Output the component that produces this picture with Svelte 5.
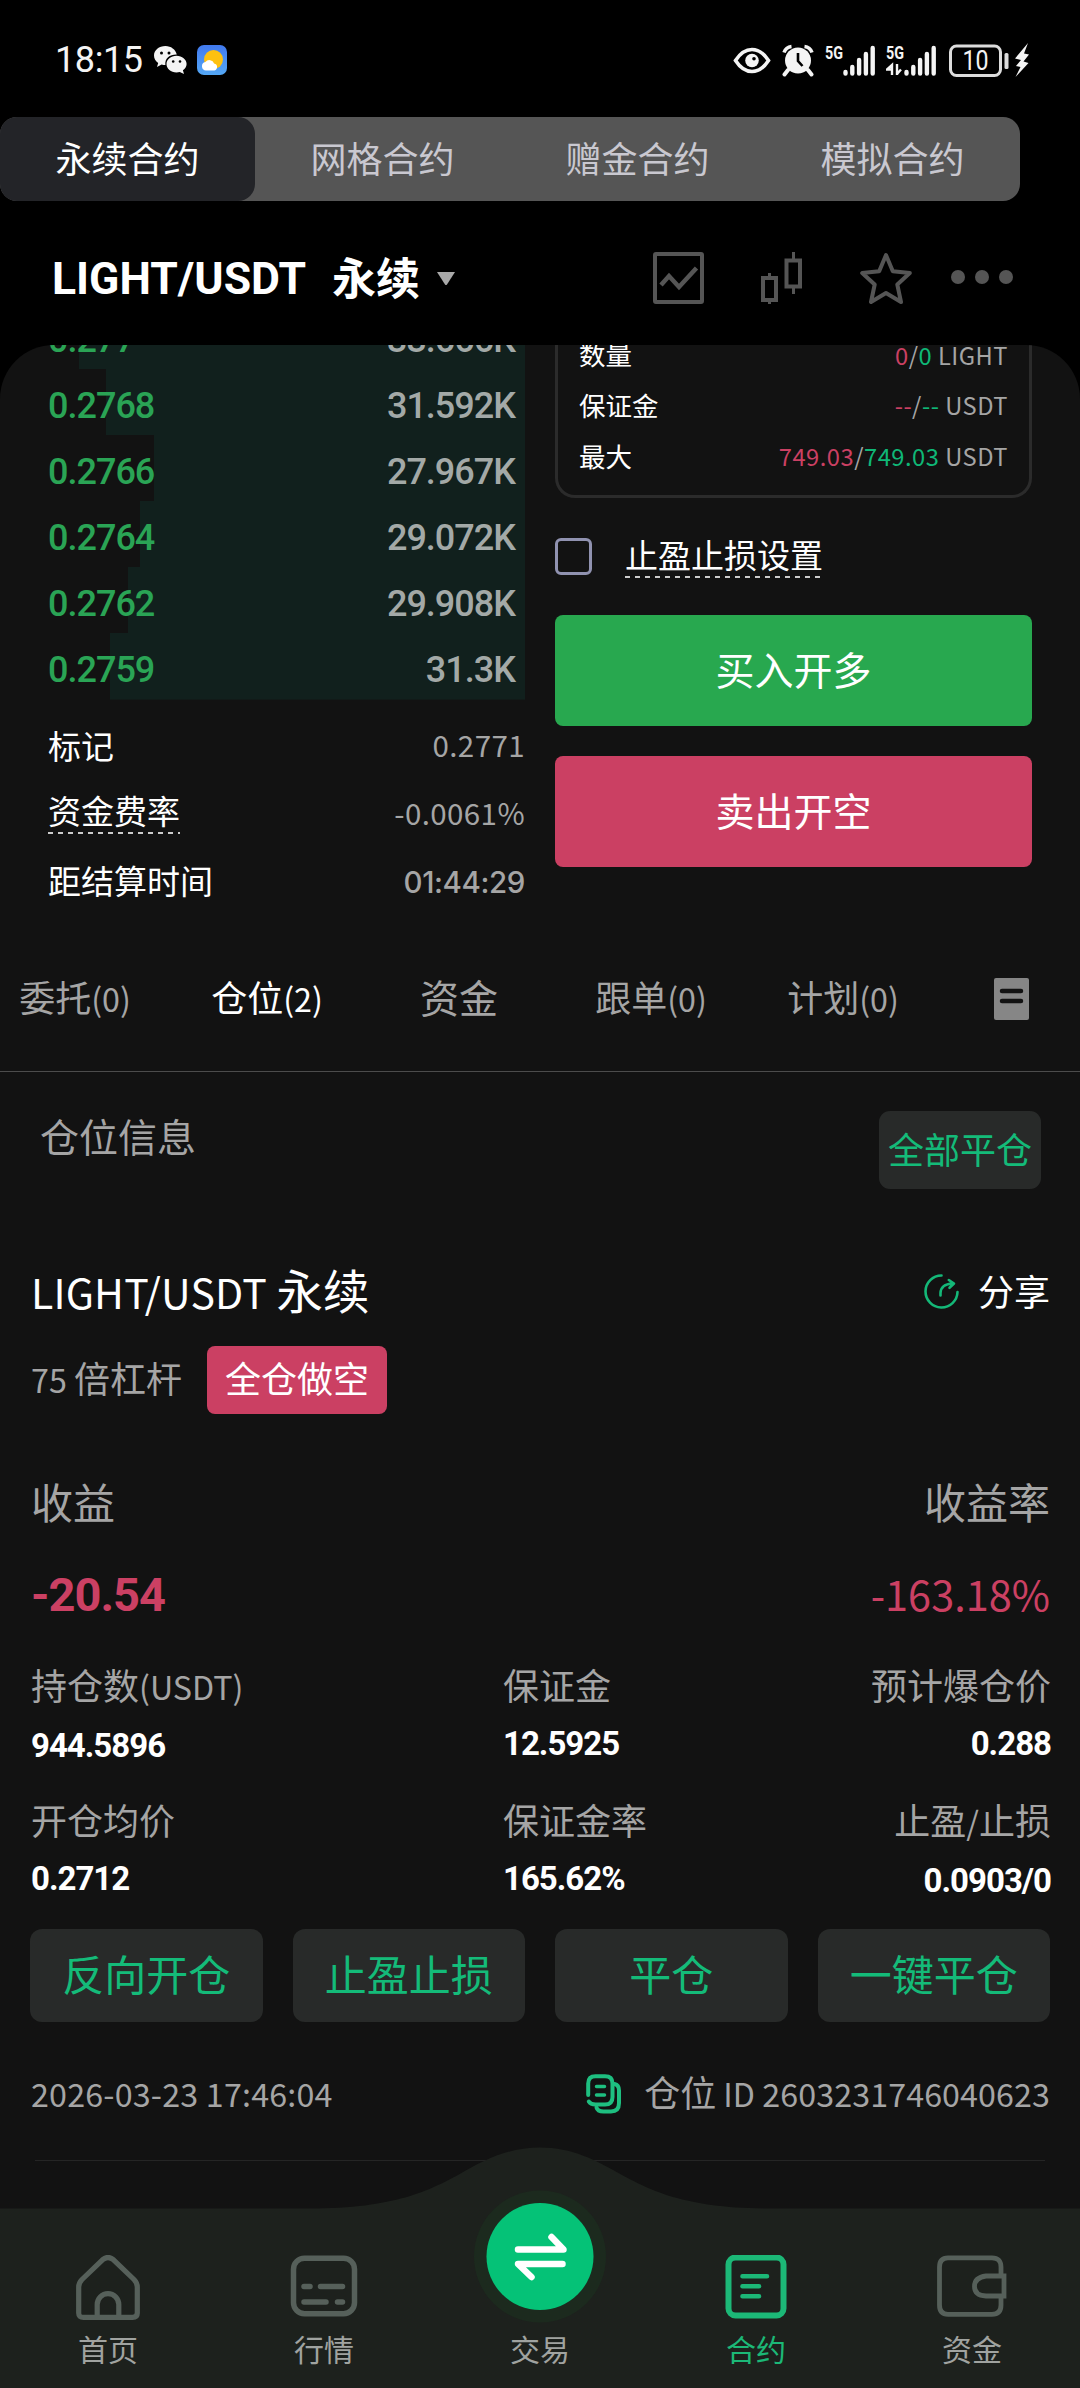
<script lang="ts">
  /**
   * Perpetual contract trading screen: order book tail, order form tail,
   * open position card and the bottom navigation.
   */

  const modes = ['永续合约', '网格合约', '赠金合约', '模拟合约'];
  let activeMode = $state(0);

  // width = depth bar length in px
  const bids = [
    { price: '0.277', amount: '33.666K', width: 446.5 },
    { price: '0.2768', amount: '31.592K', width: 419 },
    { price: '0.2766', amount: '27.967K', width: 371.5 },
    { price: '0.2764', amount: '29.072K', width: 385.5 },
    { price: '0.2762', amount: '29.908K', width: 397 },
    { price: '0.2759', amount: '31.3K', width: 415 },
  ];

  const limits = [
    { label: '数量', short: '0', long: '0', unit: 'LIGHT' },
    { label: '保证金', short: '--', long: '--', unit: 'USDT' },
    { label: '最大', short: '749.03', long: '749.03', unit: 'USDT' },
  ];

  const tabs = ['委托(0)', '仓位(2)', '资金', '跟单(0)', '计划(0)'];
  let activeTab = $state(1);

  const stats = [
    { label: '持仓数(USDT)', value: '944.5896' },
    { label: '保证金', value: '12.5925' },
    { label: '预计爆仓价', value: '0.288' },
    { label: '开仓均价', value: '0.2712' },
    { label: '保证金率', value: '165.62%' },
    { label: '止盈/止损', value: '0.0903/0' },
  ];

  const actions = ['反向开仓', '止盈止损', '平仓', '一键平仓'];

  // Latin runs are set a little smaller than the Chinese around them
  function runs(text: string) {
    return text
      .split(/([\x20-\x7e]+)/)
      .filter(Boolean)
      .map((t) => ({ t, latin: /^[\x20-\x7e]/.test(t) }));
  }
</script>

{#snippet mixed(text: string)}{#each runs(text) as r}{#if r.latin}<span class="latin">{r.t}</span>{:else}{r.t}{/if}{/each}{/snippet}

<div class="screen">
  <header class="status">
    <span class="clock">18:15</span>
    <svg class="wechat" width="33" height="28" viewBox="0 0 33 28">
      <path fill="#f4f4f4" d="M11.5 0C5 0 0 4.200 0 9.500c0 3 1.600 5.600 4.200 7.400L3 21l4.600-2.400c1.300.4 2.600.5 3.800.5C10.500 12 16 8.300 22.800 8.500 21.500 3.500 17 0 11.500 0z" />
      <path fill="#f4f4f4" d="M22.500 9.800c-5.600 0-10 3.700-10 8.300s4.400 8.300 10 8.300c1.200 0 2.300-.2 3.300-.5L30 28l-1.100-3.700c2.300-1.500 3.700-3.700 3.700-6.200 0-4.600-4.500-8.300-10.100-8.300z" />
      <g fill="#000">
        <circle cx="7.500" cy="7" r="1.500" /><circle cx="15" cy="7" r="1.500" />
        <circle cx="19.200" cy="15.500" r="1.300" /><circle cx="26" cy="15.500" r="1.300" />
      </g>
    </svg>
    <svg class="weather" width="30" height="30" viewBox="0 0 30 30">
      <defs>
        <linearGradient id="sky" x1="0" y1="0" x2="0" y2="1">
          <stop offset="0" stop-color="#4179ee" /><stop offset="1" stop-color="#54a8f6" />
        </linearGradient>
      </defs>
      <rect width="30" height="30" rx="7" fill="url(#sky)" />
      <circle cx="16.500" cy="14.500" r="9.500" fill="#fdc110" />
      <path fill="#fff" d="M9 25.500a4.300 4.300 0 0 1-.6-8.500 5 5 0 0 1 8.700 1.500 3.600 3.600 0 0 1 .4 7z" />
    </svg>

    <div class="status-right">
      <svg width="38" height="34" viewBox="0 0 38 34">
        <path d="M2.500 17.500C8 9 13.500 6.500 19 6.500s11 2.500 16.500 11C30 26 24.500 28.500 19 28.500S8 26 2.500 17.500z" fill="none" stroke="#f4f4f4" stroke-width="3.600" />
        <circle cx="19" cy="17.500" r="6.800" fill="#f4f4f4" /><circle cx="21" cy="15.800" r="1.800" fill="#000" />
      </svg>
      <svg class="alarm" width="32" height="34" viewBox="0 0 32 34">
        <circle cx="16" cy="17.500" r="13" fill="#f4f4f4" />
        <path d="M2 9.500A9 9 0 0 1 9.500 3.500M22.500 3.500A9 9 0 0 1 30 9.500" fill="none" stroke="#f4f4f4" stroke-width="3.500" />
        <path d="M6 27l-3.500 4.500M26 27l3.500 4.500" stroke="#f4f4f4" stroke-width="4" stroke-linecap="round" />
        <path d="M16 10v8l4.500 5" fill="none" stroke="#000" stroke-width="2.600" />
      </svg>
      <svg class="signal" width="52" height="34" viewBox="0 0 52 34">
        <text x="0" y="15.500" textLength="18" lengthAdjust="spacingAndGlyphs">5G</text>
        <path d="M20.500 29v1.500M27.300 24v6.500M34.100 17v13.500M40.900 11v19.500M47.700 5v25.500" stroke="#f4f4f4" stroke-width="4.400" stroke-linecap="round" />
      </svg>
      <svg class="signal two" width="52" height="34" viewBox="0 0 52 34">
        <text x="0" y="15.500" textLength="18" lengthAdjust="spacingAndGlyphs">5G</text>
        <path d="M6 32V22l-5 4.500H6M11 21v11M11 31l4-4.500" fill="none" stroke="#f4f4f4" stroke-width="2.400" />
        <path d="M20.500 29v1.500M27.300 24v6.500M34.100 17v13.500M40.900 11v19.500M47.700 5v25.500" stroke="#f4f4f4" stroke-width="4.400" stroke-linecap="round" />
      </svg>
      <svg class="battery" width="62" height="34" viewBox="0 0 62 34">
        <rect x="1.500" y="3" width="50" height="29.500" rx="6" fill="none" stroke="#dcdcdc" stroke-width="3" />
        <rect x="55.500" y="10" width="4" height="16" rx="1.500" fill="#dcdcdc" />
        <text class="level" x="26.500" y="27" text-anchor="middle" textLength="26" lengthAdjust="spacingAndGlyphs">10</text>
      </svg>
      <svg class="bolt" width="16" height="34" viewBox="0 0 16 34">
        <path fill="#f4f4f4" d="M14 0L1 15.500l6 1.500-5 6 4.500 1L1.500 34 14.500 20l-5-1.500 5.500-7-5-1z" />
      </svg>
    </div>
  </header>

  <nav class="modes">
    {#each modes as mode, i}
      <button class="mode" class:active={activeMode === i} onclick={() => (activeMode = i)}>{mode}</button>
    {/each}
  </nav>

  <div class="pair">
    <span class="pair-name">LIGHT/USDT</span>
    <span class="pair-kind">永续</span>
    <svg class="caret" width="20" height="15" viewBox="0 0 20 15"><path d="M1 1h18l-8 12.500q-1 1-2 0z" fill="#a9a9a9" /></svg>
    <div class="tools">
      <svg width="52" height="52" viewBox="0 0 52 52" fill="none" stroke="#555" stroke-width="4">
        <rect x="2" y="2" width="47" height="48" rx="1" />
        <path d="M8 33l8-9 10 11 17.500-19" stroke-width="4.500" />
      </svg>
      <svg class="candles" width="42" height="52" viewBox="0 0 42 52" fill="none" stroke="#555">
        <rect x="2" y="26" width="13" height="22" stroke-width="4" />
        <rect x="25.500" y="8.500" width="13.500" height="26" stroke-width="4" />
        <path d="M8.500 21v5M8.500 48v4M32.500 0v8M32.500 35v7" stroke-width="3" />
      </svg>
      <svg class="star" width="52" height="52" viewBox="0 0 52 52">
        <path d="M26 3l6.800 16.200 17 1.800-12.500 11.500L41 50 26 41 11 50l3.700-17.500L2.200 21l17-1.800z" fill="none" stroke="#555" stroke-width="4" stroke-linejoin="round" />
      </svg>
      <svg class="dots" width="62" height="52" viewBox="0 0 62 52" fill="#555">
        <circle cx="7" cy="25" r="7" /><circle cx="31" cy="25" r="7" /><circle cx="55" cy="25" r="7" />
      </svg>
    </div>
  </div>

  <main class="sheet">
    <section class="trade">
      <div class="book">
        {#each bids as bid}
          <div class="bid" style="--depth: {bid.width}px">
            <span class="price">{bid.price}</span>
            <span class="amount">{bid.amount}</span>
          </div>
        {/each}
        <div class="facts">
          <div class="fact"><span>标记</span><span class="val latin">0.2771</span></div>
          <div class="fact"><span class="hint">资金费率</span><span class="val latin">-0.0061%</span></div>
          <div class="fact"><span>距结算时间</span><span class="val countdown">01:44:29</span></div>
        </div>
      </div>

      <div class="form">
        <div class="limits">
          {#each limits as row}
            <div class="limit">
              <span>{row.label}</span>
              <span class="val latin"><i class="red">{row.short}</i>/<i class="green">{row.long}</i> {row.unit}</span>
            </div>
          {/each}
        </div>
        <label class="tpsl">
          <span class="box"></span>
          <span class="hint">止盈止损设置</span>
        </label>
        <button class="order buy">买入开多</button>
        <button class="order sell">卖出开空</button>
      </div>
    </section>

    <nav class="tabs">
      {#each tabs as tab, i}
        <button class="tab" class:active={activeTab === i} class:big={!tab.includes('(')} onclick={() => (activeTab = i)}>{@render mixed(tab)}</button>
      {/each}
      <svg class="list" width="35" height="42" viewBox="0 0 35 42">
        <rect width="35" height="42" rx="2" fill="#868686" />
        <path d="M8 13h19M8 23h19" stroke="#121212" stroke-width="4.500" stroke-linecap="round" />
      </svg>
    </nav>

    <div class="section-head">
      <span class="section-title">仓位信息</span>
      <button class="close-all">全部平仓</button>
    </div>

    <article class="position">
      <div class="line title-line">
        <span class="name">{@render mixed('LIGHT/USDT 永续')}</span>
        <span class="share">
          <svg width="35" height="35" viewBox="0 0 35 35" fill="none" stroke="#14b878" stroke-width="2.600" stroke-linecap="round" stroke-linejoin="round">
            <path d="M17.500 1.500A16 16 0 1 0 33.500 18" />
            <path d="M16.500 21.500V19Q17 10 28.500 9.500M24.800 6L30 9.500 25.500 13.800" />
          </svg>
          <span>分享</span>
        </span>
      </div>
      <div class="line lever-line">
        <span class="lever">{@render mixed('75 倍杠杆')}</span>
        <span class="badge">全仓做空</span>
      </div>
      <div class="line pnl-label"><span>收益</span><span>收益率</span></div>
      <div class="line pnl"><b>-20.54</b><span class="rate">-163.18%</span></div>

      <div class="stats">
        {#each stats as s}
          <div class="stat">
            <span class="stat-label">{@render mixed(s.label)}</span>
            <b>{s.value}</b>
          </div>
        {/each}
      </div>

      <div class="actions">
        {#each actions as a}
          <button>{a}</button>
        {/each}
      </div>

      <div class="line meta">
        <span class="latin time">2026-03-23 17:46:04</span>
        <span class="id">
          <svg width="35" height="40" viewBox="0 0 35 40" fill="none" stroke="#1ebf80" stroke-width="4" stroke-linecap="round">
            <path d="M2.200 21V9.500Q2.200 2.200 9.500 2.200H19Q26.500 2.200 26.500 9.500V23Q26.500 30.500 19 30.500H9.500Q4.500 30.500 2.800 27.500" />
            <path d="M28.500 10Q33 11 33 16.500V29Q33 37.500 25 37.500H17.500Q11.500 37.500 10.500 33.500" />
            <path d="M10.500 12.500h8M10.500 21h8" stroke-width="3.500" />
          </svg>
          <span>仓位<span class="latin pid">ID 2603231746040623</span></span>
        </span>
      </div>
      <hr />
    </article>
  </main>

  <nav class="bottom">
    <svg class="hump" width="1080" height="241" viewBox="0 0 1080 241">
      <path d="M0 61.500H310C395 61.500 430 43 458 28C484 13 508 .5 540 .5C572 .5 596 13 622 28C650 43 685 61.500 770 61.500H1080V241H0z" fill="#1d211d" />
      <circle cx="540" cy="109.500" r="66" fill="#1c2a1e" />
      <circle cx="540" cy="109.500" r="53.500" fill="#05c277" />
      <path d="M518 102.500H563.500L551.500 90M562.500 117H518L531.500 130" fill="none" stroke="#fff" stroke-width="6.500" stroke-linecap="round" stroke-linejoin="round" />
    </svg>
    <a href="#home" class="item">
      <svg width="68" height="66" viewBox="0 0 68 66" fill="none" stroke="#56605a" stroke-width="5.200" stroke-linejoin="round">
        <path d="M28.500 4.800Q34 .2 39.500 4.800L60 24.500Q63.300 28 63.300 32V58Q63.300 62.400 58.500 62.400H9.500Q4.700 62.400 4.700 58V32Q4.700 28 8 24.500z" />
        <path d="M23.200 61V49.500A10.800 10.800 0 0 1 44.800 49.500V61" />
      </svg>
      <span>首页</span>
    </a>
    <a href="#market" class="item">
      <svg width="68" height="66" viewBox="0 0 68 66" fill="none" stroke="#56605a" stroke-width="5.500" stroke-linecap="round">
        <rect x="3.500" y="3.200" width="61" height="55.500" rx="11" />
        <path d="M14 31.500h6M30.500 31.500h22M14 47h22M47.500 47h5" />
      </svg>
      <span>行情</span>
    </a>
    <a href="#trade" class="item">
      <span class="spacer"></span>
      <span>交易</span>
    </a>
    <a href="#contract" class="item active">
      <svg width="68" height="66" viewBox="0 0 68 66" fill="none" stroke="#1cb877" stroke-linecap="round">
        <rect x="6.500" y="2.500" width="55" height="58" rx="7" stroke-width="6" />
        <path d="M20.500 21.300H45M20.500 31.300H37M20.500 41.300H37" stroke-width="4.600" />
      </svg>
      <span>合约</span>
    </a>
    <a href="#assets" class="item">
      <svg width="70" height="66" viewBox="0 0 70 66" fill="none" stroke="#56605a" stroke-width="4.800">
        <path d="M64 21V12Q64 2.800 55 2.800H11Q2.500 2.800 2.500 12V50Q2.500 59.300 11 59.300H55Q64 59.300 64 50V42" />
        <path d="M67 21H49Q37.500 22.500 37.500 31.500T49 41H67z" />
      </svg>
      <span>资金</span>
    </a>
  </nav>
</div>

<style>
  :global(body) {
    margin: 0;
    background: #000;
  }

  .screen {
    position: relative;
    width: 1080px;
    height: 2388px;
    overflow: hidden;
    display: flex;
    flex-direction: column;
    background: #000;
    color: #fff;
    font-family: 'Noto Sans CJK SC', sans-serif;
    font-size: 36px;
    line-height: 1;
  }

  .screen svg {
    display: block;
    flex: none;
  }

  button {
    padding: 0 0 5px;
    border: 0;
    background: none;
    color: inherit;
    font: inherit;
  }

  b {
    font-family: Roboto, sans-serif;
    font-weight: 700;
  }

  .latin { font-size: 0.895em; }
  .red { color: #cb4063; }
  .green { color: #0fb877; }

  /* status bar */
  .status {
    display: flex;
    align-items: center;
    height: 117px;
    box-sizing: border-box;
    padding: 2px 50px 0 55px;
  }

  .clock {
    width: 99px;
    font-family: Roboto, sans-serif;
    font-size: 36px;
    letter-spacing: -0.4px;
    color: #f4f4f4;
  }

  .weather { margin-left: 10px; }

  .status-right {
    display: flex;
    align-items: center;
    margin-left: auto;
  }

  .alarm { margin-left: 11px; }
  .signal { margin-left: 11px; }
  .signal.two { margin-left: 9px; }
  .battery { margin-left: 11px; }
  .bolt { margin-left: 3px; }

  .signal text {
    font: 700 19px Roboto, sans-serif;
    fill: #f4f4f4;
  }

  .battery .level {
    font: 400 28px Roboto, sans-serif;
    fill: #f4f4f4;
  }

  /* contract modes */
  .modes {
    display: flex;
    width: 1020px;
    height: 84px;
    border-radius: 17px;
    background: #555;
  }

  .mode {
    width: 255px;
    border-radius: 17px;
    color: #c9c8d0;
  }

  .mode.active {
    background: #232428;
    color: #fff;
  }

  /* pair header */
  .pair {
    display: flex;
    align-items: center;
    height: 144px;
    box-sizing: border-box;
    padding: 10px 67px 0 52px;
  }

  .pair-name {
    width: 280px;
    padding-top: 3px;
    font: 700 44.500px/1 Roboto, sans-serif;
    white-space: nowrap;
  }

  .pair-kind {
    padding-bottom: 4px;
    font-size: 44px;
    font-weight: 700;
  }

  .caret { margin-left: 16px; }

  .tools {
    display: flex;
    margin-left: auto;
    margin-top: -1px;
  }

  .candles { margin-left: 56px; }
  .star { margin-left: 57px; }
  .dots { margin-left: 39px; }

  /* scrolling sheet */
  .sheet {
    flex: 1;
    border-radius: 54px 54px 0 0;
    overflow: hidden;
    background: #121212;
  }

  .trade {
    display: flex;
    gap: 30px;
    height: 582px;
    padding: 0 48px;
  }

  .book {
    width: 477px;
    flex: none;
    margin-top: -42px;
  }

  .bid {
    display: flex;
    justify-content: space-between;
    align-items: center;
    height: 66.100px;
    box-sizing: border-box;
    padding: 7px 10px 0 0;
    background: linear-gradient(#11201d, #11201d) right / var(--depth) 100% no-repeat;
    font: 500 36px/1 Roboto, sans-serif;
    letter-spacing: -1px;
  }

  .price { color: #2aa455; }
  .amount { color: #a3a9a7; }

  .facts {
    padding-top: 12px;
    font-size: 33px;
  }

  .fact {
    display: flex;
    justify-content: space-between;
    align-items: center;
    height: 67.400px;
  }

  .val {
    color: #a5a5a5;
    letter-spacing: 0.4px;
  }

  .countdown {
    padding-top: 5px;
    font: 500 29.500px/1 Inter, sans-serif;
    letter-spacing: -0.4px;
  }

  .hint {
    padding-bottom: 7px;
    margin-bottom: -3px;
    background: repeating-linear-gradient(90deg, #ccc 0 5px, transparent 5px 10px) bottom / 100% 2px no-repeat;
  }

  .form {
    width: 477px;
    display: flex;
    flex-direction: column;
  }

  .limits {
    height: 153px;
    box-sizing: border-box;
    padding: 0 21px;
    border: 3px solid #2b2b2b;
    border-top: 0;
    border-radius: 0 0 20px 20px;
    font-size: 26.500px;
  }

  .limit {
    display: flex;
    justify-content: space-between;
    align-items: center;
    height: 50.900px;
  }

  .limit:first-child { margin-top: -16px; }
  .limit i { font-style: normal; }
  .limit .val { letter-spacing: 0.5px; }

  .tpsl {
    display: flex;
    align-items: center;
    gap: 33px;
    height: 117px;
    font-size: 33px;
  }

  .box {
    width: 31px;
    height: 31px;
    border: 3px solid #9092b0;
    border-radius: 6px;
  }

  .order {
    height: 111px;
    border-radius: 8px;
    font-size: 39px;
  }

  .buy { background: #28a84f; }
  .sell { margin-top: 30px; background: #cb4063; }

  /* order / position tabs */
  .tabs {
    display: flex;
    align-items: center;
    height: 144px;
    border-bottom: 1px solid #4c4c4c;
    color: #a5a5a5;
  }

  .tab {
    width: 192px;
    height: 144px;
    white-space: nowrap;
  }

  .tab:first-child { margin-left: -21px; }
  .tab.active { color: #fff; }
  .tab.big { font-size: 39px; }
  .list { margin-left: 55px; }

  .section-head {
    display: flex;
    justify-content: space-between;
    align-items: flex-start;
    height: 157px;
    box-sizing: border-box;
    padding: 39px 39px 0 40px;
  }

  .section-title {
    font-size: 39px;
    line-height: 49px;
    color: #a5a5a5;
  }

  .close-all {
    width: 162px;
    height: 78px;
    border-radius: 11px;
    background: #282a29;
    color: #14bb79;
    font-size: 36px;
  }

  /* position card */
  .position {
    padding: 0 30px;
  }

  .line {
    display: flex;
    justify-content: space-between;
    align-items: center;
    padding-left: 1px;
  }

  .title-line {
    height: 126px;
  }

  .name {
    padding-bottom: 6px;
    font-size: 46.500px;
  }

  .name .latin {
    font-size: 41px;
    letter-spacing: 0.2px;
  }

  .share {
    display: flex;
    align-items: center;
    gap: 19px;
  }

  .share svg { margin-top: -2px; }
  .share span { padding-bottom: 5px; }

  .lever-line {
    justify-content: flex-start;
    gap: 25px;
    height: 50px;
    color: #a5a5a5;
  }

  .lever { padding-bottom: 6px; }

  .badge {
    height: 68px;
    padding: 0 18px;
    border-radius: 8px;
    background: #cb4063;
    color: #fff;
    line-height: 63px;
  }

  .pnl-label {
    margin-top: 64px;
    height: 64px;
    font-size: 42px;
    color: #a5a5a5;
  }

  .pnl {
    height: 122px;
    color: #cb4063;
    font-size: 45px;
  }

  .pnl b {
    font-size: 47px;
    letter-spacing: -1px;
  }

  .rate {
    font-size: 41.500px;
  }

  .stats {
    display: grid;
    grid-template-columns: 472px 300px 248px;
    grid-auto-rows: 135px;
    margin-top: 4px;
    padding-left: 1px;
    margin-right: 1px;
  }

  .stat {
    display: flex;
    flex-direction: column;
  }

  .stat:nth-child(3n) { align-items: flex-end; }

  .stat-label {
    line-height: 50px;
    color: #a5a5a5;
    white-space: nowrap;
  }

  .stat b {
    margin-top: 18px;
    font-size: 33px;
    letter-spacing: -1px;
  }

  .actions {
    display: grid;
    grid-template-columns: repeat(4, 1fr);
    gap: 30px;
  }

  .actions button {
    height: 93px;
    border-radius: 12px;
    background: #282a29;
    color: #14bb79;
    font-size: 42px;
  }

  .meta {
    height: 138px;
    padding-top: 5px;
    box-sizing: border-box;
    color: #a5a5a5;
  }

  .time { letter-spacing: 0.2px; }

  .id {
    display: flex;
    align-items: center;
    gap: 23px;
  }

  .id > span { padding-bottom: 4px; }
  .pid { margin-left: 7px; letter-spacing: 0.100px; }

  hr {
    height: 1px;
    margin: 0 5px;
    border: 0;
    background: #252525;
  }

  /* bottom navigation, floats over the sheet */
  .bottom {
    position: absolute;
    left: 0;
    bottom: 0;
    display: flex;
    align-items: flex-end;
    width: 1080px;
    height: 241px;
  }

  .hump {
    position: absolute;
    inset: 0;
  }

  .item {
    position: relative;
    display: flex;
    flex-direction: column;
    align-items: center;
    width: 216px;
    height: 133px;
    color: #a0a3a0;
    font-size: 30px;
    text-decoration: none;
  }

  .item span:last-child { margin-top: 12px; }
  .item.active { color: #1cb877; }

  .spacer {
    height: 66px;
  }
</style>
